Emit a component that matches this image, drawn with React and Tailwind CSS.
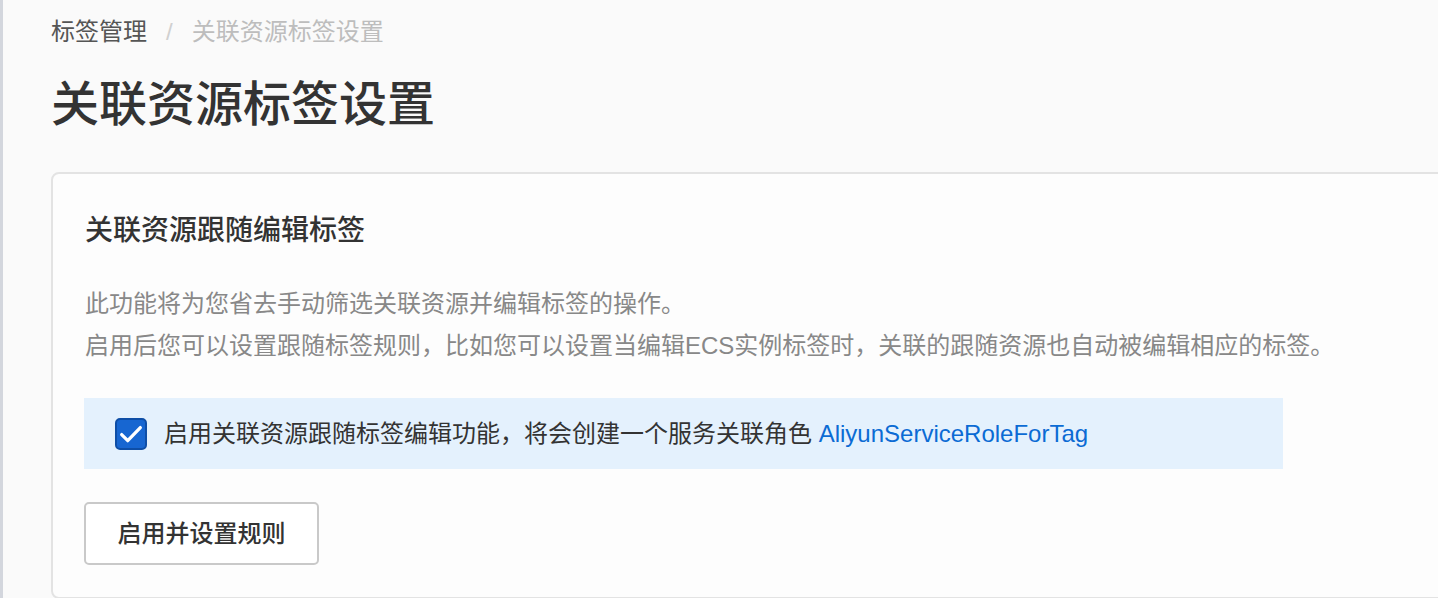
import React, { useState } from 'react';

const font = { fontFamily: '"Liberation Sans", "Noto Sans CJK SC", sans-serif' };

function Checkbox({ checked, onChange }) {
    return (
        <button
            onClick={onChange}
            className={`flex h-8 w-8 shrink-0 items-center justify-center rounded-[5px] border-2 ${
                checked ? 'border-[#0e4ea6] bg-[#1766d1]' : 'border-[#c4c6cf] bg-white'
            }`}
        >
            {checked && (
                <svg viewBox="0 0 24 24" className="h-7 w-7" fill="none">
                    <path d="M4 12.5l5.2 5.2L20 6.5" stroke="white" strokeWidth="2.8" strokeLinecap="round" strokeLinejoin="round" />
                </svg>
            )}
        </button>
    );
}

export default function App() {
    const [enabled, setEnabled] = useState(true);

    return (
        <div className="min-h-screen overflow-hidden border-l-[3px] border-[#d3d6dd] bg-[#fafafa] pl-[48px]" style={font}>
            {/* breadcrumb */}
            <div className="flex items-center pt-4 text-[24px] leading-8">
                <span className="text-[#555]">标签管理</span>
                <span className="mx-[19px] text-[#d0d0d0]">/</span>
                <span className="text-[#bdbdbd]">关联资源标签设置</span>
            </div>

            <h1 className="mt-[29px] text-[48px] font-medium leading-[56px] text-[#333]">关联资源标签设置</h1>

            <div className="mt-[39px] w-[1440px] rounded-lg border-2 border-[#e3e3e3] bg-[#fdfdfd] pt-[39px] pb-[32px] pl-[32px]">
                <h2 className="text-[28px] font-medium leading-9 text-[#333]">关联资源跟随编辑标签</h2>

                <div className="mt-[34px] text-[24px] leading-[42px] text-[#888]">
                    <p>此功能将为您省去手动筛选关联资源并编辑标签的操作。</p>
                    <p>启用后您可以设置跟随标签规则，比如您可以设置当编辑ECS实例标签时，关联的跟随资源也自动被编辑相应的标签。</p>
                </div>

                <div className="mt-[31px] -ml-px flex h-[71px] w-[1199px] items-center gap-[17px] bg-[#e4f1fd] pl-[31px]">
                    <Checkbox checked={enabled} onChange={() => setEnabled(!enabled)} />
                    <p className="text-[24px] leading-8 text-[#333]">
                        启用关联资源跟随标签编辑功能，将会创建一个服务关联角色{' '}
                        <a href="#" className="text-[#0b6bd4]">AliyunServiceRoleForTag</a>
                    </p>
                </div>

                <button className="mt-[33px] -ml-px h-[63px] w-[235px] rounded-[5px] border-2 border-[#c9c9c9] bg-white text-[24px] font-medium text-[#333]">
                    启用并设置规则
                </button>
            </div>
        </div>
    );
}
